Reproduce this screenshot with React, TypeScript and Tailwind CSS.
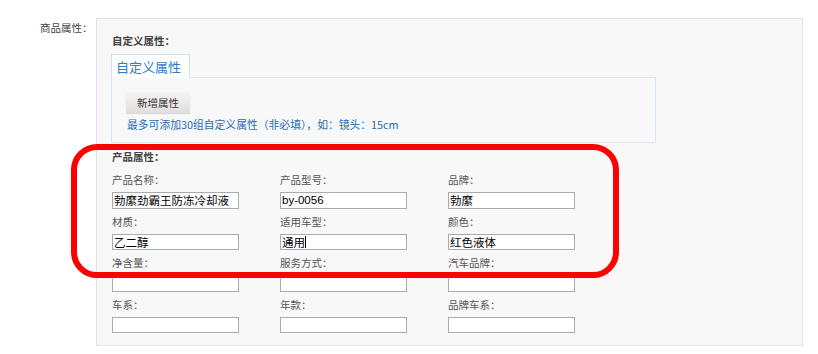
import { useState } from 'react'

const cjk = '[font-family:"Noto_Sans_CJK_SC",sans-serif]'

type Field = { label: string; value: string; caret?: boolean }

const fields: Array<Field> = [
  { label: '产品名称：', value: '勃縻劲霸王防冻冷却液' },
  { label: '产品型号：', value: 'by-0056' },
  { label: '品牌：', value: '勃縻' },
  { label: '材质：', value: '乙二醇' },
  { label: '适用车型：', value: '通用', caret: true },
  { label: '颜色：', value: '红色液体' },
  { label: '净含量：', value: '' },
  { label: '服务方式：', value: '' },
  { label: '汽车品牌：', value: '' },
  { label: '车系：', value: '' },
  { label: '年款：', value: '' },
  { label: '品牌车系：', value: '' },
]

function AttrField({ field }: { field: Field }) {
  const [value, setValue] = useState(field.value)
  return (
    <div className="flex flex-col">
      <div className="h-[25px] pt-[5px] text-[10.5px] leading-[16px] text-[#555]">
        {field.label}
      </div>
      <div className="relative w-[127px]">
        <input
          value={value}
          onChange={(e) => setValue(e.target.value)}
          className={`block h-[16.5px] w-full border border-[#ababab] bg-white px-[1px] text-[11.5px] leading-[14px] text-black outline-none [font-family:"Liberation_Sans","Noto_Sans_CJK_SC",sans-serif]`}
        />
        {field.caret ? (
          <span className="absolute top-[2px] left-[25px] h-[12px] w-px bg-black" />
        ) : null}
      </div>
    </div>
  )
}

export default function App() {
  return (
    <div className={`relative h-[354px] w-[818px] overflow-hidden bg-white ${cjk}`}>
      <div className="flex pt-[18px] pl-[40px]">
        <div className="w-[56px] pt-[2px] text-[10.5px] leading-[16px] text-[#444]">
          商品属性：
        </div>
        <div className="h-[328px] w-[707px] border border-[#e3e3e3] bg-[#f8f8f8] pt-[14px] pl-[14px]">
          <div className="pl-px text-[10.5px] leading-[16px] font-semibold text-[#444]">
            自定义属性：
          </div>

          <div className="mt-[5px] flex">
            <div className="relative z-10 -mb-px flex h-[24px] w-[79px] items-center border border-b-0 border-[#d3e3f6] bg-white pl-[4px] text-[13px] text-[#2a7dcc]">
              自定义属性
            </div>
          </div>
          <div className="h-[66px] w-[545px] border border-[#d9e6f7] pt-[10px] pl-[14px]">
            <button
              type="button"
              className="h-[21px] w-[64px] bg-gradient-to-b from-[#f5f3f3] to-[#e2dede] text-[10.5px] text-[#333] shadow-[0_1px_1px_rgba(0,0,0,0.12)]"
            >
              新增属性
            </button>
            <div className="mt-[4px] pl-px text-[10.8px] leading-[14px] text-[#1f6cb3]">
              最多可添加30组自定义属性（非必填），如：镜头：15cm
            </div>
          </div>

          <div className="mt-[6px] pl-px text-[10.5px] leading-[16px] font-semibold text-[#444]">
            产品属性：
          </div>
          <div className="mt-[2px] grid w-[504px] grid-cols-[168px_168px_168px] pl-px">
            {fields.map((f) => (
              <AttrField key={f.label} field={f} />
            ))}
          </div>
        </div>
      </div>

      <div className="pointer-events-none absolute top-[144px] left-[71px] h-[134px] w-[548px] rounded-[26px] border-[6px] border-[#ff0000]" />
    </div>
  )
}
